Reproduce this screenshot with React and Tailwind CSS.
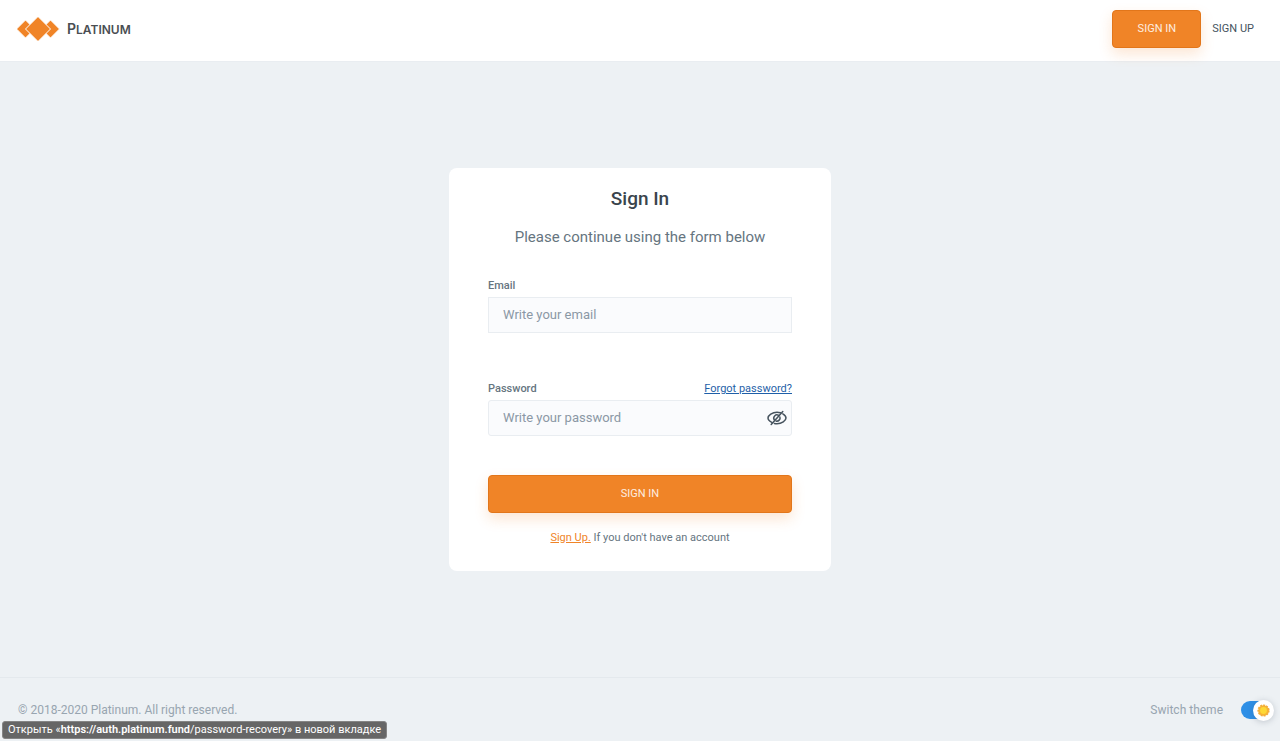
import { useState } from "react";

function Logo() {
  return (
    <a href="/" className="flex items-center gap-[7px] text-[#4a4e52]">
      <svg width="43" height="24" viewBox="0 0 43 24" aria-hidden="true">
        <g fill="#f08427" stroke="#fff" strokeWidth="1">
          <path d="M8.500 3 17.500 12l-9 9L-.5 12z" />
          <path d="M33.500 3 42.500 12l-9 9-9-9z" />
          <path d="M21 -.5 33.500 12 21 24.500 8.500 12z" />
        </g>
      </svg>
      <span className="font-['Inter',sans-serif] text-[12px] leading-4 font-semibold">
        <span className="text-[14px]">P</span>LATINUM
      </span>
    </a>
  );
}

function EyeOffIcon() {
  return (
    <svg width="20" height="16" viewBox="0 0 20 16" fill="none" stroke="#46535e" strokeWidth="1.500" strokeLinecap="round">
      <path d="M5.200 12.600C2.800 11.400 1 9.600 1 8c0-2.600 4.300-5.800 9-5.800 1.200 0 2.300.2 3.400.5" />
      <path d="M15.800 3.900C17.800 5.100 19 6.600 19 8c0 2.600-4.300 5.800-9 5.800-.9 0-1.800-.1-2.600-.3" />
      <path d="M7.400 10a3.200 3.200 0 0 1 4.300-4.600M12.900 6.900a3.200 3.200 0 0 1-3.900 4.100" />
      <path d="M4.200 14.500 15.800 1.500" />
    </svg>
  );
}

function ThemeSwitch() {
  const [light, setLight] = useState(true);

  return (
    <label className="flex cursor-pointer items-center gap-[18px]">
      <span>Switch theme</span>
      <span className="relative flex h-[22px] w-[34px] items-center">
        <input
          type="checkbox"
          role="switch"
          checked={light}
          onChange={(e) => setLight(e.target.checked)}
          className="peer h-[18px] w-[30px] appearance-none rounded-full bg-gray-400 checked:bg-[#2e8fe6]"
        />
        <span className="pointer-events-none absolute left-0 flex size-[21px] items-center justify-center rounded-full bg-white shadow-[0_1px_6px_rgba(60,70,90,0.25)] peer-checked:left-3">
          <svg width="13" height="13" viewBox="0 0 13 13" aria-hidden="true">
            <circle cx="6.500" cy="6.500" r="5.300" fill="#f7b334" stroke="#f2ae3c" strokeWidth="1.600" strokeDasharray="2 1" />
            <circle cx="6.500" cy="6.500" r="3.400" fill="#fdd835" />
          </svg>
        </span>
      </span>
    </label>
  );
}

const inputClass =
  "h-9 w-full border border-[#e9edf1] bg-[#fafbfd] pl-[14px] pb-[2px] text-[13px] text-[#46535e] outline-none placeholder:text-[#8b98a5]";
const buttonClass =
  "rounded-[4px] border border-[#e2761a] bg-[#f08427] text-[11px] text-[#fdeee0] shadow-[0_6px_14px_rgba(240,132,39,0.2)]";

export default function App() {
  const [email, setEmail] = useState("");
  const [password, setPassword] = useState("");
  const [showPassword, setShowPassword] = useState(false);

  return (
    <div className="relative flex min-h-screen flex-col bg-[#edf1f4] font-['Roboto','Noto_Sans',sans-serif] text-[#66757f]">
      <header className="flex items-start justify-between border-b border-[#e9edf1] bg-white pt-[10px] pr-[26px] pb-[13px] pl-[17px]">
        <div className="flex h-[38px] items-center">
          <Logo />
        </div>
        <nav className="flex items-center gap-[11px] text-[11px]">
          <button type="button" className={`${buttonClass} h-[38px] w-[89px]`}>SIGN IN</button>
          <a href="/signup" className="text-[#46535e]">SIGN UP</a>
        </nav>
      </header>

      <main className="flex flex-1 items-center justify-center px-4 py-6">
        <form
          onSubmit={(e) => e.preventDefault()}
          className="w-full max-w-[382px] rounded-lg bg-white px-[39px] pt-[19px] pb-[25px]"
        >
          <h1 className="text-center text-[19px] leading-6 font-medium text-[#3a444d]">Sign In</h1>
          <p className="mt-4 text-center text-[15px] leading-5">Please continue using the form below</p>

          <div className="mt-[31px]">
            <label htmlFor="email" className="block pb-[3px] text-[11px] leading-4 font-medium">Email</label>
            <input
              id="email"
              type="email"
              placeholder="Write your email"
              value={email}
              onChange={(e) => setEmail(e.target.value)}
              className={inputClass}
            />
          </div>

          <div className="mt-12">
            <div className="flex justify-between pb-[3px] text-[11px] leading-4">
              <label htmlFor="password" className="font-medium">Password</label>
              <a href="/password-recovery" className="text-[#1f5fa8] underline">Forgot password?</a>
            </div>
            <div className="relative">
              <input
                id="password"
                type={showPassword ? "text" : "password"}
                placeholder="Write your password"
                value={password}
                onChange={(e) => setPassword(e.target.value)}
                className={`${inputClass} rounded-[3px]`}
              />
              <button
                type="button"
                aria-label="Show password"
                onClick={() => setShowPassword(!showPassword)}
                className="absolute inset-y-0 right-[5px] flex items-center"
              >
                <EyeOffIcon />
              </button>
            </div>
          </div>

          <button type="submit" className={`${buttonClass} mt-[39px] h-[38px] w-full`}>SIGN IN</button>
          <p className="mt-[17px] text-center text-[11px] leading-4">
            <a href="/signup" className="text-[#f08427] underline">Sign Up.</a> If you don't have an account
          </p>
        </form>
      </main>

      <footer className="flex items-start justify-between border-t border-[#e4e9ed] pt-[21px] pr-[5px] pb-5 pl-[18px] text-[12px] text-[#98a5b0]">
        <p className="leading-[22px]">© 2018-2020 Platinum. All right reserved.</p>
        <ThemeSwitch />
      </footer>

      {/* link preview bar */}
      <div className="absolute bottom-[2px] left-[2px] rounded-[3px] border border-[#858585] bg-[#666] px-[5px] text-[11px] leading-4 whitespace-nowrap text-white">
        Открыть «<b className="font-semibold">https://auth.platinum.fund</b>/password-recovery» в новой вкладке
      </div>
    </div>
  );
}
